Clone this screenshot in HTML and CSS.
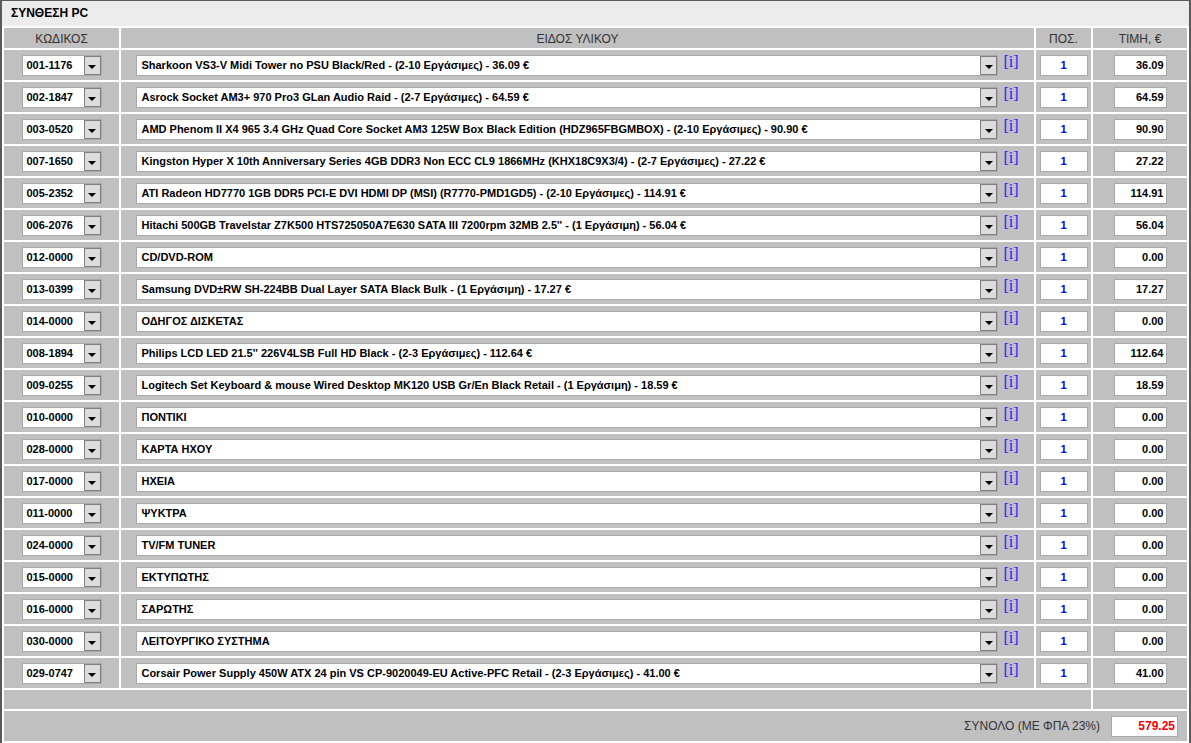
FILE: index.html
```html
<!DOCTYPE html>
<html lang="el">
<head>
<meta charset="utf-8">
<title>ΣΥΝΘΕΣΗ PC</title>
<link rel="stylesheet" href="styles.css">
</head>
<body>
<div class="panel">
  <div class="title">ΣΥΝΘΕΣΗ PC</div>
  <table class="grid">
    <colgroup>
      <col class="c1"><col class="c2"><col class="c3"><col class="c4">
    </colgroup>
    <thead>
      <tr class="head">
        <th>ΚΩΔΙΚΟΣ</th><th>ΕΙΔΟΣ ΥΛΙΚΟΥ</th><th>ΠΟΣ.</th><th>ΤΙΜΗ, €</th>
      </tr>
    </thead>
    <tbody>
      <tr><td><span class="csel"><span class="val">001-1176</span><span class="btn"><i class="arr"></i></span></span></td><td><span class="dsel"><span class="val">Sharkoon VS3-V Midi Tower no PSU Black/Red - (2-10 Εργάσιμες) - 36.09 €</span><span class="btn"><i class="arr"></i></span></span><a class="info">[i]</a></td><td><span class="qty">1</span></td><td><span class="price">36.09</span></td></tr>
      <tr><td><span class="csel"><span class="val">002-1847</span><span class="btn"><i class="arr"></i></span></span></td><td><span class="dsel"><span class="val">Asrock Socket AM3+ 970 Pro3 GLan Audio Raid - (2-7 Εργάσιμες) - 64.59 €</span><span class="btn"><i class="arr"></i></span></span><a class="info">[i]</a></td><td><span class="qty">1</span></td><td><span class="price">64.59</span></td></tr>
      <tr><td><span class="csel"><span class="val">003-0520</span><span class="btn"><i class="arr"></i></span></span></td><td><span class="dsel"><span class="val">AMD Phenom II X4 965 3.4 GHz Quad Core Socket AM3 125W Box Black Edition (HDZ965FBGMBOX) - (2-10 Εργάσιμες) - 90.90 €</span><span class="btn"><i class="arr"></i></span></span><a class="info">[i]</a></td><td><span class="qty">1</span></td><td><span class="price">90.90</span></td></tr>
      <tr><td><span class="csel"><span class="val">007-1650</span><span class="btn"><i class="arr"></i></span></span></td><td><span class="dsel"><span class="val">Kingston Hyper X 10th Anniversary Series 4GB DDR3 Non ECC CL9 1866MHz (KHX18C9X3/4) - (2-7 Εργάσιμες) - 27.22 €</span><span class="btn"><i class="arr"></i></span></span><a class="info">[i]</a></td><td><span class="qty">1</span></td><td><span class="price">27.22</span></td></tr>
      <tr><td><span class="csel"><span class="val">005-2352</span><span class="btn"><i class="arr"></i></span></span></td><td><span class="dsel"><span class="val">ATI Radeon HD7770 1GB DDR5 PCI-E DVI HDMI DP (MSI) (R7770-PMD1GD5) - (2-10 Εργάσιμες) - 114.91 €</span><span class="btn"><i class="arr"></i></span></span><a class="info">[i]</a></td><td><span class="qty">1</span></td><td><span class="price">114.91</span></td></tr>
      <tr><td><span class="csel"><span class="val">006-2076</span><span class="btn"><i class="arr"></i></span></span></td><td><span class="dsel"><span class="val">Hitachi 500GB Travelstar Z7K500 HTS725050A7E630 SATA III 7200rpm 32MB 2.5'' - (1 Εργάσιμη) - 56.04 €</span><span class="btn"><i class="arr"></i></span></span><a class="info">[i]</a></td><td><span class="qty">1</span></td><td><span class="price">56.04</span></td></tr>
      <tr><td><span class="csel"><span class="val">012-0000</span><span class="btn"><i class="arr"></i></span></span></td><td><span class="dsel"><span class="val">CD/DVD-ROM</span><span class="btn"><i class="arr"></i></span></span><a class="info">[i]</a></td><td><span class="qty">1</span></td><td><span class="price">0.00</span></td></tr>
      <tr><td><span class="csel"><span class="val">013-0399</span><span class="btn"><i class="arr"></i></span></span></td><td><span class="dsel"><span class="val">Samsung DVD±RW SH-224BB Dual Layer SATA Black Bulk - (1 Εργάσιμη) - 17.27 €</span><span class="btn"><i class="arr"></i></span></span><a class="info">[i]</a></td><td><span class="qty">1</span></td><td><span class="price">17.27</span></td></tr>
      <tr><td><span class="csel"><span class="val">014-0000</span><span class="btn"><i class="arr"></i></span></span></td><td><span class="dsel"><span class="val">ΟΔΗΓΟΣ ΔΙΣΚΕΤΑΣ</span><span class="btn"><i class="arr"></i></span></span><a class="info">[i]</a></td><td><span class="qty">1</span></td><td><span class="price">0.00</span></td></tr>
      <tr><td><span class="csel"><span class="val">008-1894</span><span class="btn"><i class="arr"></i></span></span></td><td><span class="dsel"><span class="val">Philips LCD LED 21.5'' 226V4LSB Full HD Black - (2-3 Εργάσιμες) - 112.64 €</span><span class="btn"><i class="arr"></i></span></span><a class="info">[i]</a></td><td><span class="qty">1</span></td><td><span class="price">112.64</span></td></tr>
      <tr><td><span class="csel"><span class="val">009-0255</span><span class="btn"><i class="arr"></i></span></span></td><td><span class="dsel"><span class="val">Logitech Set Keyboard &amp; mouse Wired Desktop MK120 USB Gr/En Black Retail - (1 Εργάσιμη) - 18.59 €</span><span class="btn"><i class="arr"></i></span></span><a class="info">[i]</a></td><td><span class="qty">1</span></td><td><span class="price">18.59</span></td></tr>
      <tr><td><span class="csel"><span class="val">010-0000</span><span class="btn"><i class="arr"></i></span></span></td><td><span class="dsel"><span class="val">ΠΟΝΤΙΚΙ</span><span class="btn"><i class="arr"></i></span></span><a class="info">[i]</a></td><td><span class="qty">1</span></td><td><span class="price">0.00</span></td></tr>
      <tr><td><span class="csel"><span class="val">028-0000</span><span class="btn"><i class="arr"></i></span></span></td><td><span class="dsel"><span class="val">ΚΑΡΤΑ ΗΧΟΥ</span><span class="btn"><i class="arr"></i></span></span><a class="info">[i]</a></td><td><span class="qty">1</span></td><td><span class="price">0.00</span></td></tr>
      <tr><td><span class="csel"><span class="val">017-0000</span><span class="btn"><i class="arr"></i></span></span></td><td><span class="dsel"><span class="val">ΗΧΕΙΑ</span><span class="btn"><i class="arr"></i></span></span><a class="info">[i]</a></td><td><span class="qty">1</span></td><td><span class="price">0.00</span></td></tr>
      <tr><td><span class="csel"><span class="val">011-0000</span><span class="btn"><i class="arr"></i></span></span></td><td><span class="dsel"><span class="val">ΨΥΚΤΡΑ</span><span class="btn"><i class="arr"></i></span></span><a class="info">[i]</a></td><td><span class="qty">1</span></td><td><span class="price">0.00</span></td></tr>
      <tr><td><span class="csel"><span class="val">024-0000</span><span class="btn"><i class="arr"></i></span></span></td><td><span class="dsel"><span class="val">TV/FM TUNER</span><span class="btn"><i class="arr"></i></span></span><a class="info">[i]</a></td><td><span class="qty">1</span></td><td><span class="price">0.00</span></td></tr>
      <tr><td><span class="csel"><span class="val">015-0000</span><span class="btn"><i class="arr"></i></span></span></td><td><span class="dsel"><span class="val">ΕΚΤΥΠΩΤΗΣ</span><span class="btn"><i class="arr"></i></span></span><a class="info">[i]</a></td><td><span class="qty">1</span></td><td><span class="price">0.00</span></td></tr>
      <tr><td><span class="csel"><span class="val">016-0000</span><span class="btn"><i class="arr"></i></span></span></td><td><span class="dsel"><span class="val">ΣΑΡΩΤΗΣ</span><span class="btn"><i class="arr"></i></span></span><a class="info">[i]</a></td><td><span class="qty">1</span></td><td><span class="price">0.00</span></td></tr>
      <tr><td><span class="csel"><span class="val">030-0000</span><span class="btn"><i class="arr"></i></span></span></td><td><span class="dsel"><span class="val">ΛΕΙΤΟΥΡΓΙΚΟ ΣΥΣΤΗΜΑ</span><span class="btn"><i class="arr"></i></span></span><a class="info">[i]</a></td><td><span class="qty">1</span></td><td><span class="price">0.00</span></td></tr>
      <tr><td><span class="csel"><span class="val">029-0747</span><span class="btn"><i class="arr"></i></span></span></td><td><span class="dsel"><span class="val">Corsair Power Supply 450W ATX 24 pin VS CP-9020049-EU Active-PFC Retail - (2-3 Εργάσιμες) - 41.00 €</span><span class="btn"><i class="arr"></i></span></span><a class="info">[i]</a></td><td><span class="qty">1</span></td><td><span class="price">41.00</span></td></tr>
      <tr class="empty"><td colspan="3"></td><td></td></tr>
      <tr class="total"><td colspan="4"><span class="tlabel">ΣΥΝΟΛΟ (ΜΕ ΦΠΑ 23%)</span><span class="tval">579.25</span></td></tr>
    </tbody>
  </table>
</div>
</body>
</html>
```

FILE: styles.css
```css
html, body {
  margin: 0;
  padding: 0;
  background: #fff;
}
body {
  font-family: "Liberation Sans", Arial, sans-serif;
  color: #000;
}
.panel {
  width: 1191px;
  box-sizing: border-box;
  border-top: 1px solid #5a5a5a;
  border-left: 2px solid #5a5a5a;
  border-right: 2px solid #5a5a5a;
  background: #fff;
}
.title {
  height: 25px;
  line-height: 25px;
  background: #ececec;
  font-size: 12px;
  font-weight: bold;
  padding-left: 9px;
}
.grid {
  width: 100%;
  table-layout: fixed;
  border-collapse: separate;
  border-spacing: 2px;
  background: #fff;
}
.c1 { width: 115px; }
.c2 { width: 913px; }
.c3 { width: 55px; }
.c4 { width: 94px; }
.grid th, .grid td {
  background: #c0c0c0;
  padding: 0;
  text-align: center;
  vertical-align: middle;
  white-space: nowrap;
}
.head th {
  height: 20px;
  padding-top: 2px;
  box-sizing: border-box;
  font-size: 12px;
  font-weight: normal;
  color: #333;
}
.grid tbody td {
  height: 30px;
}
.csel, .dsel {
  display: inline-flex;
  box-sizing: border-box;
  height: 21px;
  border: 1px solid #a9a9a9;
  background: #fff;
  vertical-align: middle;
  text-align: left;
}
.csel { width: 80px; }
.dsel { width: 862px; }
.val {
  flex: 1;
  font-size: 11px;
  font-weight: bold;
  line-height: 19px;
  overflow: hidden;
}
.csel .val { padding-left: 4px; }
.dsel .val { padding-left: 4px; }
.btn {
  box-sizing: border-box;
  width: 17px;
  height: 19px;
  background: #dcdcdc;
  border: 1px solid #808080;
  display: flex;
  align-items: center;
  justify-content: center;
}
.arr {
  display: block;
  width: 0;
  height: 0;
  margin-top: 3px;
  border-left: 4px solid transparent;
  border-right: 4px solid transparent;
  border-top: 4px solid #000;
}
.info {
  display: inline-block;
  vertical-align: middle;
  margin-left: 5px;
  font-family: "Liberation Serif", "Times New Roman", serif;
  font-size: 16px;
  line-height: 16px;
  color: #2020ff;
  position: relative;
  top: -3px;
}
.qty, .price {
  display: inline-block;
  box-sizing: border-box;
  height: 21px;
  line-height: 19px;
  border: 1px solid #a9a9a9;
  background: #fff;
  font-size: 11px;
  font-weight: bold;
  vertical-align: middle;
}
.qty {
  width: 48px;
  color: #0000ff;
  text-align: center;
}
.price {
  width: 53px;
  text-align: right;
  padding-right: 2px;
}
.grid tbody tr.empty td {
  height: 19px;
}
.grid tbody tr.total td {
  height: 30px;
  text-align: right;
  padding-right: 9px;
}
.tlabel {
  font-size: 12px;
  color: #333;
  vertical-align: middle;
  margin-right: 11px;
}
.tval {
  display: inline-block;
  box-sizing: border-box;
  width: 67px;
  height: 21px;
  line-height: 19px;
  border: 1px solid #a9a9a9;
  background: #fff;
  color: #ff0000;
  font-size: 12px;
  font-weight: bold;
  text-align: right;
  padding-right: 2px;
  vertical-align: middle;
}
```
